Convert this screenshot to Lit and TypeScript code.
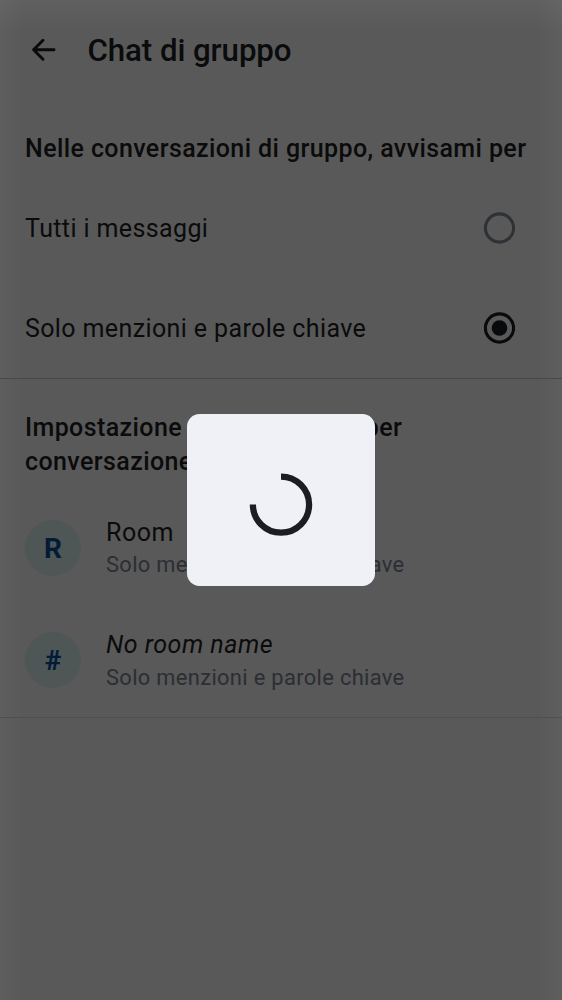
import { LitElement, html, css, svg } from "lit";
import { customElement, property } from "lit/decorators.js";

@customElement("radio-row")
class RadioRow extends LitElement {
  @property() label = "";
  @property({ type: Boolean }) checked = false;

  static styles = css`
    :host { display: flex; align-items: center; justify-content: space-between; height: 100px; padding: 0 47px 0 25px; box-sizing: border-box; }
    .label { font-size: 25px; letter-spacing: 0.38px; line-height: 37.5px; color: #0b0b0c; padding-top: 1.5px; }
    .radio { width: 32px; height: 32px; display: block; }
  `;

  render() {
    const color = this.checked ? "#090a0b" : "#2e3136";
    return html`
      <span class="label">${this.label}</span>
      <svg class="radio" viewBox="0 0 32 32">
        <circle cx="16.5" cy="16" r="14.1" fill="none" stroke=${color} stroke-width="3.1" />
        ${this.checked ? svg`<circle cx="16.5" cy="16" r="7.8" fill=${color} />` : ""}
      </svg>
    `;
  }
}

@customElement("room-row")
class RoomRow extends LitElement {
  @property() initial = "";
  @property() name = "";
  @property() detail = "";
  @property({ type: Boolean }) unnamed = false;

  static styles = css`
    :host { display: flex; align-items: center; gap: 25px; height: 112.5px; padding: 0 25px; box-sizing: border-box; }
    .avatar { width: 56px; height: 56px; border-radius: 50%; background: #4f5656; color: #021b36; font-size: 28px; font-weight: 700; line-height: 34px; display: flex; align-items: center; justify-content: center; padding-top: 2px; box-sizing: border-box; }
    .text { padding-bottom: 3px; }
    .name { font-size: 25px; letter-spacing: 0.5px; line-height: 37.5px; color: #0b0b0c; }
    .unnamed { font-style: italic; }
    .detail { font-size: 21.875px; letter-spacing: 0.34px; line-height: 28px; color: #2b2e33; }
  `;

  render() {
    return html`
      <div class="avatar">${this.initial}</div>
      <div class="text">
        <div class="name ${this.unnamed ? "unnamed" : ""}">${this.name}</div>
        <div class="detail">${this.detail}</div>
      </div>
    `;
  }
}

@customElement("app-root")
class AppRoot extends LitElement {
  static styles = css`
    :host {
      display: block; position: relative; height: 1000px; overflow: hidden;
      font-family: Roboto, sans-serif;
      background:
        linear-gradient(to right, rgba(255,255,255,0.03), rgba(255,255,255,0) 24px, rgba(255,255,255,0) calc(100% - 24px), rgba(255,255,255,0.03)),
        linear-gradient(to bottom, rgba(255,255,255,0.045), rgba(255,255,255,0) 32px),
        #595959;
    }
    .bar { display: flex; align-items: center; height: 100px; padding-left: 25px; gap: 25px; box-sizing: border-box; }
    .back { width: 37.5px; height: 37.5px; display: block; }
    .title { font-size: 31.25px; font-weight: 500; letter-spacing: -0.08px; line-height: 40px; color: #0a0b0c; margin: 0; padding-top: 1px; }
    .heading { font-size: 25px; font-weight: 500; letter-spacing: 0.4px; line-height: 34.375px; color: #0b0b0c; margin: 0; padding: 32px 25px 11.6px; white-space: nowrap; }
    .wide { padding-right: 130px; padding-bottom: 12px; white-space: normal; }
    .section { border-bottom: 1px solid #47484a; }
    .faint { border-bottom-color: #4e4f50; }
    .dialog { position: absolute; left: 187px; top: 414px; width: 188px; height: 172px; border-radius: 12.5px; background: #f0f1f6; display: flex; align-items: center; justify-content: center; }
    .spinner { width: 64px; height: 64px; margin-top: 8px; }
  `;

  render() {
    return html`
      <header class="bar">
        <svg class="back" viewBox="0 0 37.5 37.5" fill="none" stroke="#090a0b" stroke-width="2.9" stroke-linecap="round" stroke-linejoin="round">
          <path d="M18 9.2 8.6 18.75 18 28.3M8.6 18.75H29" />
        </svg>
        <h1 class="title">Chat di gruppo</h1>
      </header>
      <section class="section">
        <h2 class="heading">Nelle conversazioni di gruppo, avvisami per</h2>
        <radio-row label="Tutti i messaggi"></radio-row>
        <radio-row label="Solo menzioni e parole chiave" checked></radio-row>
      </section>
      <section class="section faint">
        <h2 class="heading wide">Impostazione personalizzata per conversazione</h2>
        <room-row initial="R" name="Room" detail="Solo menzioni e parole chiave"></room-row>
        <room-row initial="#" name="No room name" detail="Solo menzioni e parole chiave" unnamed></room-row>
      </section>
      <div class="dialog">
        <svg class="spinner" viewBox="0 0 64 64">
          <path d="M32 4.5A28.1 28.1 0 1 1 3.9 32.6" fill="none" stroke="#1b1d22" stroke-width="6.25" />
        </svg>
      </div>
    `;
  }
}
